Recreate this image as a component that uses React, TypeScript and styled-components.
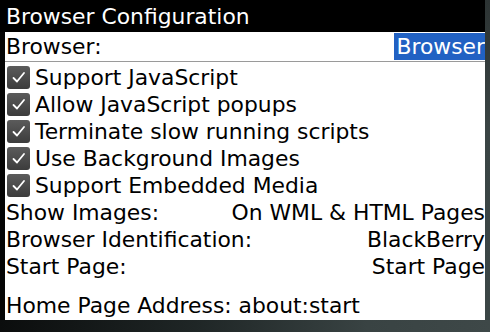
import React from "react";
import styled, { createGlobalStyle } from "styled-components";

const Global = createGlobalStyle`
  html, body { margin: 0; padding: 0; background: #000; }
  body { font-family: "DejaVu Sans", "Liberation Sans", sans-serif; }
`;

const Frame = styled.div`
  width: 490px;
  height: 332px;
  display: grid;
  grid-template-columns: 5px 480px 5px;
  grid-template-rows: 320px 12px;
  background: #000;
  overflow: hidden;
`;

const LeftEdge = styled.div`
  background: #050505;
`;

const RightEdge = styled.div`
  background: linear-gradient(#2c3333, #3a4444 40%, #3b4646);
`;

const BottomEdge = styled.div`
  grid-column: 1 / 4;
  background: linear-gradient(90deg, #0b0d0d 0%, #1f2626 40%, #394343 75%, #3e4848 100%);
`;

const Screen = styled.div`
  background: #fff;
  display: flex;
  flex-direction: column;
  color: #000;
  font-size: 21.85px;
`;

const TitleBar = styled.div`
  height: 32px;
  background: #000;
  color: #fff;
  display: flex;
  align-items: center;
  margin-left: -5px;
  padding-left: 6px;
  white-space: nowrap;
`;

const FieldRow = styled.div`
  height: 29px;
  border-bottom: 1px solid #9a9a9a;
  display: flex;
  align-items: center;
  justify-content: space-between;
  padding-left: 1px;
  margin-bottom: 2px;
`;

const Highlight = styled.span`
  background: #2161c3;
  color: #fff;
  height: 27px;
  display: flex;
  align-items: center;
  padding: 0 0 0 2px;
`;

const Row = styled.div<{ $gap?: number }>`
  height: 27px;
  display: flex;
  align-items: center;
  justify-content: space-between;
  padding-left: 1px;
  margin-top: ${(p) => p.$gap ?? 0}px;
  white-space: nowrap;
`;

const CheckLabel = styled.label`
  display: flex;
  align-items: center;
  gap: 5px;
`;

const Box = styled.span`
  width: 23px;
  height: 23px;
  border-radius: 3px;
  background: linear-gradient(#5b5b5b, #3c3c3c);
  display: flex;
  align-items: center;
  justify-content: center;
  margin-left: 1px;
`;

const Check = () => (
  <Box>
    <svg width="17" height="17" viewBox="0 0 17 17">
      <path d="M3.5 9 L7 12.5 L14 4" fill="none" stroke="#fff" strokeWidth="1.8" strokeLinecap="round" strokeLinejoin="round" />
    </svg>
  </Box>
);

const checks = [
  "Support JavaScript",
  "Allow JavaScript popups",
  "Terminate slow running scripts",
  "Use Background Images",
  "Support Embedded Media",
];

const choices: [string, string][] = [
  ["Show Images:", "On WML & HTML Pages"],
  ["Browser Identification:", "BlackBerry"],
  ["Start Page:", "Start Page"],
];

export default function App() {
  return (
    <>
      <Global />
      <Frame>
        <LeftEdge />
        <Screen>
          <TitleBar>Browser Configuration</TitleBar>
          <FieldRow>
            <span>Browser:</span>
            <Highlight>Browser</Highlight>
          </FieldRow>
          {checks.map((c) => (
            <Row key={c}>
              <CheckLabel>
                <Check />
                {c}
              </CheckLabel>
            </Row>
          ))}
          {choices.map(([l, v]) => (
            <Row key={l}>
              <span>{l}</span>
              <span>{v}</span>
            </Row>
          ))}
          <Row $gap={12}>Home Page Address: about:start</Row>
        </Screen>
        <RightEdge />
        <BottomEdge />
      </Frame>
    </>
  );
}
